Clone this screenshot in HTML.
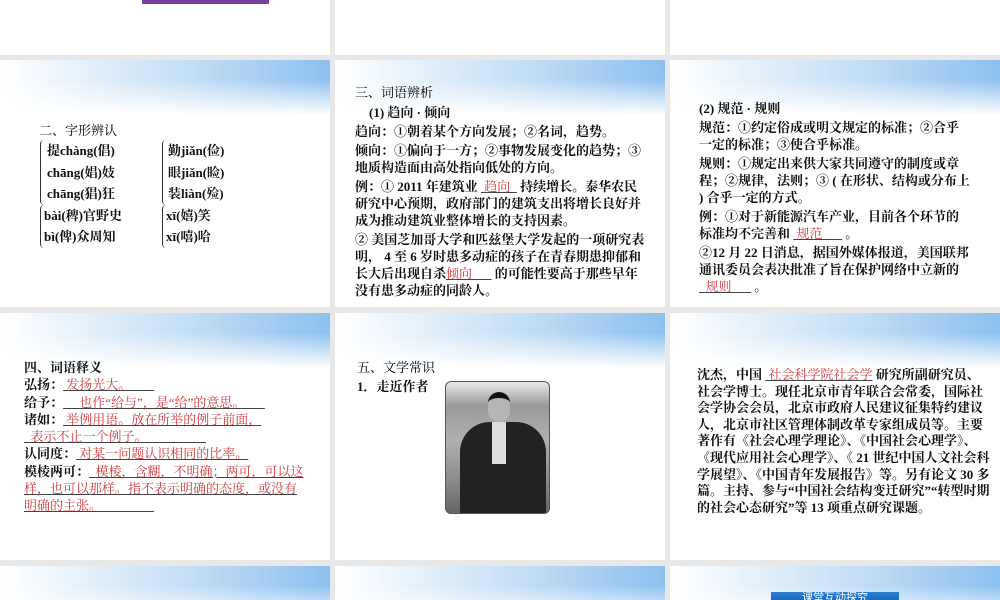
<!DOCTYPE html>
<html><head><meta charset="utf-8">
<style>
*{margin:0;padding:0;box-sizing:border-box}
body{width:1000px;height:600px;background:#e8e8e8;position:relative;overflow:hidden;font-family:"Liberation Serif","Noto Serif CJK SC",serif;color:#111}
.s{position:absolute;background:#fff;overflow:hidden}
.h{position:absolute;left:0;top:0;right:0;height:55px;
background:linear-gradient(to bottom,rgba(255,255,255,0) 0%,rgba(255,255,255,0) 35%,#fff 100%),linear-gradient(to right,#fff 0%,#e0eefa 30%,#c0dcf5 60%,#8cc0ee 100%)}
.t{position:absolute;font-size:13px;line-height:17px;font-weight:bold}
.r{color:#d0393d;font-weight:normal;text-decoration:underline;text-decoration-color:#444}
.p{margin-bottom:2px}
.n{font-weight:normal;color:#000}
</style></head><body>
<!-- row 1 -->
<div class="s" style="left:0;top:0;width:330px;height:55px"><div style="position:absolute;left:142px;top:0;width:127px;height:4px;background:#7b3fa0"></div></div>
<div class="s" style="left:335px;top:0;width:330px;height:55px"></div>
<div class="s" style="left:670px;top:0;width:330px;height:55px"></div>
<!-- row 2 -->
<div class="s" style="left:0;top:60px;width:330px;height:247px"><div class="h"></div>
<div class="t n" style="left:39px;top:62px">二、字形辨认</div>
<div class="t" style="left:40px;top:80px;line-height:21.5px">
<div style="border-left:1px solid #333;padding-left:6px;border-radius:4px 0 0 4px">提chàng(倡)<br>chāng(娼)妓<br>chāng(猖)狂</div>
<div style="border-left:1px solid #333;padding-left:3px;border-radius:4px 0 0 4px">bài(稗)官野史<br>bì(俾)众周知</div></div>
<div class="t" style="left:162px;top:80px;line-height:21.5px">
<div style="border-left:1px solid #333;padding-left:5px;border-radius:4px 0 0 4px">勤jiǎn(俭)<br>眼jiǎn(睑)<br>装liàn(殓)</div>
<div style="border-left:1px solid #333;padding-left:3px;border-radius:4px 0 0 4px">xī(嬉)笑<br>xī(嘻)哈</div></div>
</div>
<div class="s" style="left:335px;top:60px;width:330px;height:247px"><div class="h"></div>
<div class="t" style="left:20px;top:24px;width:290px">
<div class="n" style="margin-bottom:3px">三、词语辨析</div>
<div class="p" style="padding-left:14px">(1) 趋向 · 倾向</div>
<div class="p">趋向：①朝着某个方向发展；②名词，趋势。</div>
<div class="p">倾向：①偏向于一方；②事物发展变化的趋势；③地质构造面由高处指向低处的方向。</div>
<div class="p">例：① 2011 年建筑业 <span class="r">&nbsp;趋向&nbsp;&nbsp;</span> 持续增长。泰华农民研究中心预期，政府部门的建筑支出将增长良好并成为推动建筑业整体增长的支持因素。</div>
<div>② 美国芝加哥大学和匹兹堡大学发起的一项研究表明， 4 至 6 岁时患多动症的孩子在青春期患抑郁和长大后出现自杀<span class="r">倾向&nbsp;&nbsp;&nbsp;&nbsp;&nbsp;&nbsp;</span> 的可能性要高于那些早年没有患多动症的同龄人。</div>
</div></div>
<div class="s" style="left:670px;top:60px;width:330px;height:247px"><div class="h"></div>
<div class="t" style="left:29px;top:40px;width:272px">
<div class="p">(2) 规范 · 规则</div>
<div class="p">规范：①约定俗成或明文规定的标准；②合乎一定的标准；③使合乎标准。</div>
<div class="p">规则：①规定出来供大家共同遵守的制度或章程；②规律，法则；③ ( 在形状、结构或分布上 ) 合乎一定的方式。</div>
<div class="p">例：①对于新能源汽车产业，目前各个环节的标准均不完善和 <span class="r">&nbsp;规范&nbsp;&nbsp;&nbsp;&nbsp;&nbsp;&nbsp;</span> 。</div>
<div>②12 月 22 日消息，据国外媒体报道，美国联邦通讯委员会表决批准了旨在保护网络中立新的<br><span class="r">&nbsp;&nbsp;规则&nbsp;&nbsp;&nbsp;&nbsp;&nbsp;&nbsp;</span> 。</div>
</div></div>
<!-- row 3 -->
<div class="s" style="left:0;top:313px;width:330px;height:247px"><div class="h"></div>
<div class="t" style="left:24px;top:46px;width:282px;line-height:17.3px">
<div>四、词语释义</div>
<div>弘扬：<span class="r">&nbsp;发扬光大。&nbsp;&nbsp;&nbsp;&nbsp;&nbsp;&nbsp;&nbsp;</span></div>
<div>给予：<span class="r">&nbsp;&nbsp;&nbsp;&nbsp;&nbsp;也作“给与”，是“给”的意思。&nbsp;&nbsp;&nbsp;&nbsp;&nbsp;&nbsp;</span></div>
<div>诸如：<span class="r">&nbsp;举例用语。放在所举的例子前面，</span></div>
<div><span class="r">&nbsp;&nbsp;表示不止一个例子。&nbsp;&nbsp;&nbsp;&nbsp;&nbsp;&nbsp;&nbsp;&nbsp;&nbsp;&nbsp;&nbsp;&nbsp;&nbsp;&nbsp;&nbsp;&nbsp;&nbsp;&nbsp;</span></div>
<div>认同度：<span class="r">&nbsp;对某一问题认识相同的比率。</span></div>
<div>模棱两可：<span class="r">&nbsp;&nbsp;模棱，含糊，不明确；两可，可以这样，也可以那样。指不表示明确的态度，或没有明确的主张。&nbsp;&nbsp;&nbsp;&nbsp;&nbsp;&nbsp;&nbsp;&nbsp;&nbsp;&nbsp;&nbsp;&nbsp;&nbsp;&nbsp;&nbsp;&nbsp;</span></div>
</div></div>
<div class="s" style="left:335px;top:313px;width:330px;height:247px"><div class="h"></div>
<div class="t n" style="left:22px;top:46px">五、文学常识</div>
<div class="t" style="left:22px;top:65px">1．走近作者</div>
<div style="position:absolute;left:110px;top:68px;width:105px;height:133px;border:1px solid #555;border-radius:6px;overflow:hidden;background:linear-gradient(#e8e8e8 0%,#9a9a9a 18%,#b0b0b0 45%,#8a8a8a 75%,#666 100%)">
<div style="position:absolute;left:14px;top:40px;width:86px;height:100px;background:#222;border-radius:30px 30px 0 0"></div>
<div style="position:absolute;left:46px;top:40px;width:14px;height:42px;background:#ddd"></div>
<div style="position:absolute;left:42px;top:10px;width:22px;height:30px;background:#b5b5b5;border-radius:11px;border-top:6px solid #111"></div>
</div></div>
<div class="s" style="left:670px;top:313px;width:330px;height:247px"><div class="h"></div>
<div class="t" style="left:27px;top:54px;width:293px;line-height:16.6px">沈杰，中国 <span class="r">&nbsp;社会科学院社会学</span> 研究所副研究员、社会学博士。现任北京市青年联合会常委，国际社会学协会会员，北京市政府人民建议征集特约建议人，北京市社区管理体制改革专家组成员等。主要著作有《社会心理学理论》、《中国社会心理学》、《现代应用社会心理学》、《 21 世纪中国人文社会科学展望》、《中国青年发展报告》等。另有论文 30 多篇。主持、参与“中国社会结构变迁研究”“转型时期的社会心态研究”等 13 项重点研究课题。</div>
</div>
<!-- row 4 -->
<div class="s" style="left:0;top:566px;width:330px;height:34px"><div class="h"></div></div>
<div class="s" style="left:335px;top:566px;width:330px;height:34px"><div class="h"></div></div>
<div class="s" style="left:670px;top:566px;width:330px;height:34px"><div class="h"></div>
<div style="position:absolute;left:101px;top:26px;width:128px;height:12px;background:linear-gradient(#2a7fd0,#1560b0);color:#fff;font-size:11px;line-height:12px;text-align:center;font-family:'Liberation Sans','Noto Sans CJK SC',sans-serif">课堂互动探究</div></div>
</body></html>
